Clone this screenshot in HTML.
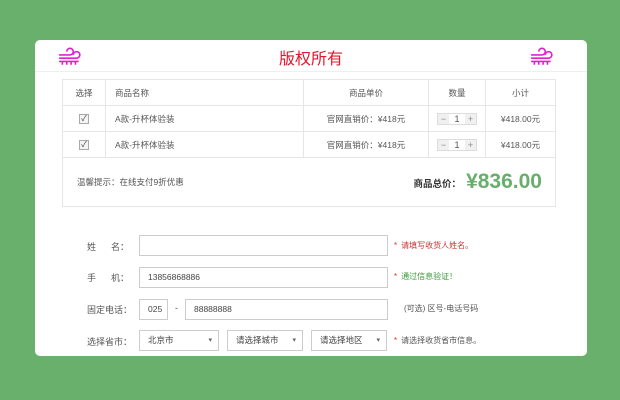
<!DOCTYPE html>
<html><head><meta charset="utf-8"><style>
*{margin:0;padding:0;box-sizing:border-box}
body{width:620px;height:400px;background:#68b06c;font-family:"Liberation Sans","Noto Sans CJK SC",sans-serif;font-size:9px;color:#555;position:relative;overflow:hidden}
.card{position:absolute;left:35px;top:40px;width:552px;height:316px;background:#fff;border-radius:5px}
.hd{height:32px;border-bottom:1px solid #eee;position:relative}
.hd .t{position:absolute;left:0;right:0;top:5px;text-align:center;color:#e0182c;font-size:16px}
.ic{position:absolute;top:7px}
table{position:absolute;left:27px;top:39px;width:494px;border-collapse:collapse}
td{border:1px solid #e6e6e6;height:26px;text-align:center;font-size:8.5px;color:#555}
td.l{text-align:left;padding-left:9px}
.cb{display:inline-block;width:10px;height:10px;border:1px solid #aaa;background:#f4f4f4;font-size:8px;line-height:8px;color:#444;vertical-align:middle}
.qty{display:inline-block;border:1px solid #ddd;height:12px;line-height:10px;width:40px;font-size:9px}
.qty span{display:inline-block;width:11px;background:#f0f0f0;color:#888}
.qty b{display:inline-block;width:16px;font-weight:normal}
.ft{position:absolute;left:27px;top:116px;width:494px;height:51px;border:1px solid #e6e6e6;border-top:none}
.ft .a{position:absolute;left:14px;top:20px;font-size:8.5px}
.ft .b{position:absolute;right:94px;top:20px;font-size:9.5px;font-weight:bold;color:#333}
.ft .c{position:absolute;right:13px;top:14px;font-size:21px;font-weight:bold;color:#6aae6e}
.lab{position:absolute;left:52px;font-size:9px;color:#555}
.in{position:absolute;height:21px;border:1px solid #ccc;font-size:8.5px;padding-left:8px;line-height:19px;color:#444}
.h{position:absolute;left:359px;font-size:8px}
.h i{font-style:normal;color:#d33;margin-right:4px}
.sel:after{content:"▾";position:absolute;right:6px;font-size:7px;color:#666}
</style></head><body>
<div class="card">
<div class="hd">
<svg class="ic" style="left:23px" width="24" height="18" viewBox="0 0 22 16" fill="none" stroke="#e020d0" stroke-width="1.5"><path d="M1 7h10a3 3 0 1 0-3-3"/><path d="M1 10h16a3 3 0 1 0-3-3"/><path d="M1 13h18M4 13v3M8 13v3M12 13v3M16 13v3"/></svg>
<div class="t">版权所有</div>
<svg class="ic" style="left:495px" width="24" height="18" viewBox="0 0 22 16" fill="none" stroke="#e020d0" stroke-width="1.5"><path d="M1 7h10a3 3 0 1 0-3-3"/><path d="M1 10h16a3 3 0 1 0-3-3"/><path d="M1 13h18M4 13v3M8 13v3M12 13v3M16 13v3"/></svg>
</div>
<table>
<tr><td style="width:43px">选择</td><td class="l" style="width:198px">商品名称</td><td style="width:125px">商品单价</td><td style="width:57px">数量</td><td>小计</td></tr>
<tr><td><span class="cb">✓</span></td><td class="l">A款-升杯体验装</td><td>官网直销价：¥418元</td><td><span class="qty"><span>−</span><b>1</b><span>+</span></span></td><td>¥418.00元</td></tr>
<tr><td><span class="cb">✓</span></td><td class="l">A款-升杯体验装</td><td>官网直销价：¥418元</td><td><span class="qty"><span>−</span><b>1</b><span>+</span></span></td><td>¥418.00元</td></tr>
</table>
<div class="ft"><div class="a">温馨提示：在线支付9折优惠</div><div class="b">商品总价：</div><div class="c">¥836.00</div></div>

<div class="lab" style="top:200px">姓&nbsp;&nbsp;&nbsp;&nbsp;&nbsp;&nbsp;名：</div>
<div class="in" style="left:104px;top:195px;width:249px"></div>
<div class="h" style="top:200px;color:#c33"><i>*</i>请填写收货人姓名。</div>

<div class="lab" style="top:231px">手&nbsp;&nbsp;&nbsp;&nbsp;&nbsp;&nbsp;机：</div>
<div class="in" style="left:104px;top:227px;width:249px">13856868886</div>
<div class="h" style="top:231px;color:#3a9a3a"><i>*</i>通过信息验证！</div>

<div class="lab" style="top:263px">固定电话：</div>
<div class="in" style="left:104px;top:259px;width:29px">025</div>
<div style="position:absolute;left:140px;top:263px">-</div>
<div class="in" style="left:150px;top:259px;width:203px">88888888</div>
<div class="h" style="top:263px;left:369px;color:#555">(可选) 区号-电话号码</div>

<div class="lab" style="top:295px">选择省市：</div>
<div class="in sel" style="left:104px;top:290px;width:80px">北京市</div>
<div class="in sel" style="left:192px;top:290px;width:76px">请选择城市</div>
<div class="in sel" style="left:276px;top:290px;width:76px">请选择地区</div>
<div class="h" style="top:295px;color:#555"><i>*</i>请选择收货省市信息。</div>
</div>
</body></html>
